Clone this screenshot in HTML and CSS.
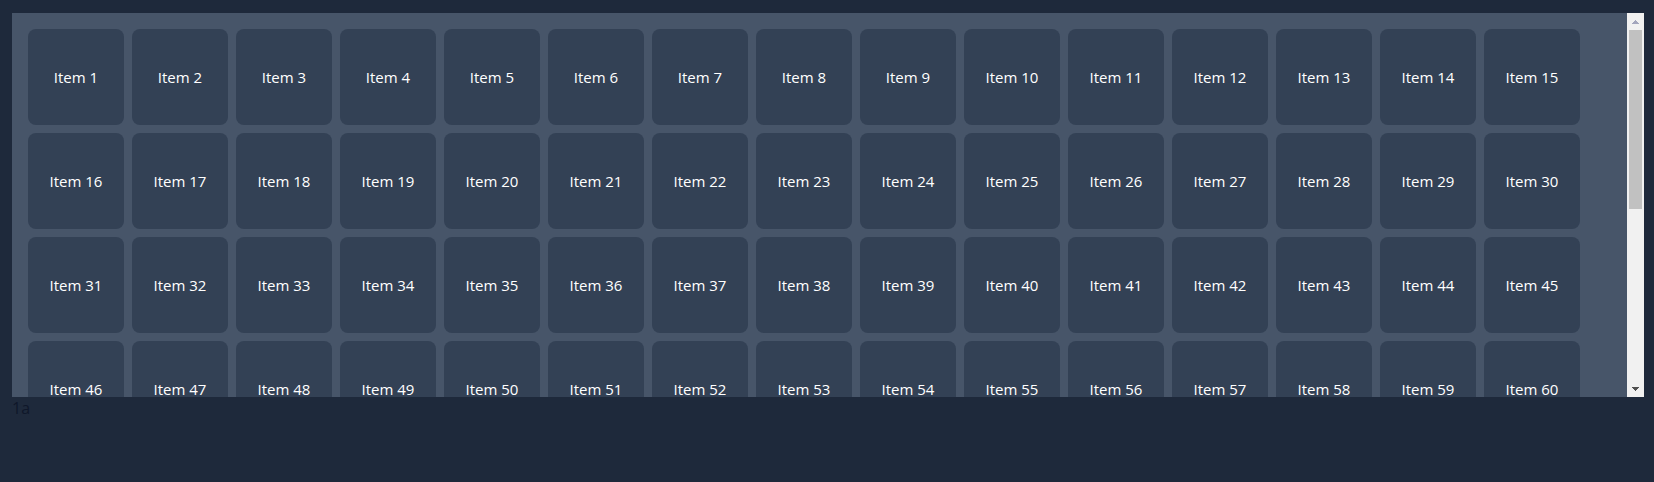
FILE: index.html
```html
<!DOCTYPE html>
<html lang="en">
<head>
<meta charset="utf-8">
<title>Grid</title>
<link rel="stylesheet" href="styles.css">
</head>
<body>
<div class="panel">
  <div class="scroller">
    <div class="grid">
      <div class="item">Item 1</div><div class="item">Item 2</div><div class="item">Item 3</div><div class="item">Item 4</div><div class="item">Item 5</div>
      <div class="item">Item 6</div><div class="item">Item 7</div><div class="item">Item 8</div><div class="item">Item 9</div><div class="item">Item 10</div>
      <div class="item">Item 11</div><div class="item">Item 12</div><div class="item">Item 13</div><div class="item">Item 14</div><div class="item">Item 15</div>
      <div class="item">Item 16</div><div class="item">Item 17</div><div class="item">Item 18</div><div class="item">Item 19</div><div class="item">Item 20</div>
      <div class="item">Item 21</div><div class="item">Item 22</div><div class="item">Item 23</div><div class="item">Item 24</div><div class="item">Item 25</div>
      <div class="item">Item 26</div><div class="item">Item 27</div><div class="item">Item 28</div><div class="item">Item 29</div><div class="item">Item 30</div>
      <div class="item">Item 31</div><div class="item">Item 32</div><div class="item">Item 33</div><div class="item">Item 34</div><div class="item">Item 35</div>
      <div class="item">Item 36</div><div class="item">Item 37</div><div class="item">Item 38</div><div class="item">Item 39</div><div class="item">Item 40</div>
      <div class="item">Item 41</div><div class="item">Item 42</div><div class="item">Item 43</div><div class="item">Item 44</div><div class="item">Item 45</div>
      <div class="item">Item 46</div><div class="item">Item 47</div><div class="item">Item 48</div><div class="item">Item 49</div><div class="item">Item 50</div>
      <div class="item">Item 51</div><div class="item">Item 52</div><div class="item">Item 53</div><div class="item">Item 54</div><div class="item">Item 55</div>
      <div class="item">Item 56</div><div class="item">Item 57</div><div class="item">Item 58</div><div class="item">Item 59</div><div class="item">Item 60</div>
      <div class="item">Item 61</div><div class="item">Item 62</div><div class="item">Item 63</div><div class="item">Item 64</div><div class="item">Item 65</div>
      <div class="item">Item 66</div><div class="item">Item 67</div><div class="item">Item 68</div><div class="item">Item 69</div><div class="item">Item 70</div>
      <div class="item">Item 71</div><div class="item">Item 72</div><div class="item">Item 73</div><div class="item">Item 74</div><div class="item">Item 75</div>
      <div class="item">Item 76</div><div class="item">Item 77</div><div class="item">Item 78</div><div class="item">Item 79</div><div class="item">Item 80</div>
      <div class="item">Item 81</div><div class="item">Item 82</div><div class="item">Item 83</div><div class="item">Item 84</div><div class="item">Item 85</div>
      <div class="item">Item 86</div><div class="item">Item 87</div><div class="item">Item 88</div><div class="item">Item 89</div><div class="item">Item 90</div>
      <div class="item">Item 91</div><div class="item">Item 92</div><div class="item">Item 93</div><div class="item">Item 94</div><div class="item">Item 95</div>
      <div class="item">Item 96</div><div class="item">Item 97</div><div class="item">Item 98</div><div class="item">Item 99</div><div class="item">Item 100</div>
    </div>
  </div>
  <div class="scrollbar">
    <div class="sb-btn">
      <svg width="7" height="4" viewBox="0 0 7 4"><path d="M3 0h1v1h1v1h1v1h1v1H0V3h1V2h1V1h1z" fill="#a3a6bd"/></svg>
    </div>
    <div class="sb-track"><div class="sb-thumb"></div></div>
    <div class="sb-btn">
      <svg width="7" height="4" viewBox="0 0 7 4"><path d="M0 0h7v1H6v1H5v1H4v1H3V3H2V2H1V1H0z" fill="#505050"/></svg>
    </div>
  </div>
</div>
<div class="label">1a</div>
</body>
</html>
```

FILE: styles.css
```css
html, body {
  margin: 0;
  background: #1e293b;
}

body {
  padding: 13px 10px 0 12px;
  font-family: "Open Sans", "Noto Sans", "Liberation Sans", sans-serif;
  color: #0f172a;
}

.panel {
  display: flex;
  height: 384px;
  background: #475569;
}

.scroller {
  flex: 1;
  overflow: hidden;
}

.grid {
  display: grid;
  grid-template-columns: repeat(auto-fill, 96px);
  grid-auto-rows: 96px;
  gap: 8px;
  padding: 16px;
}

.item {
  display: flex;
  align-items: center;
  justify-content: center;
  background: #334155;
  border-radius: 8px;
  color: #ffffff;
  font-size: 15px;
}

.scrollbar {
  width: 17px;
  flex: none;
  display: flex;
  flex-direction: column;
  background: #f1f1f1;
}

.sb-btn {
  height: 17px;
  flex: none;
  display: flex;
  align-items: center;
  justify-content: center;
}

.sb-btn svg {
  display: block;
}

.sb-track {
  flex: 1;
  display: flex;
  flex-direction: column;
}

.sb-thumb {
  height: 179px;
  margin: 0 2px;
  background: #c1c1c1;
}

.label {
  font-size: 16px;
  line-height: 22px;
  color: #0f172a;
}
```
